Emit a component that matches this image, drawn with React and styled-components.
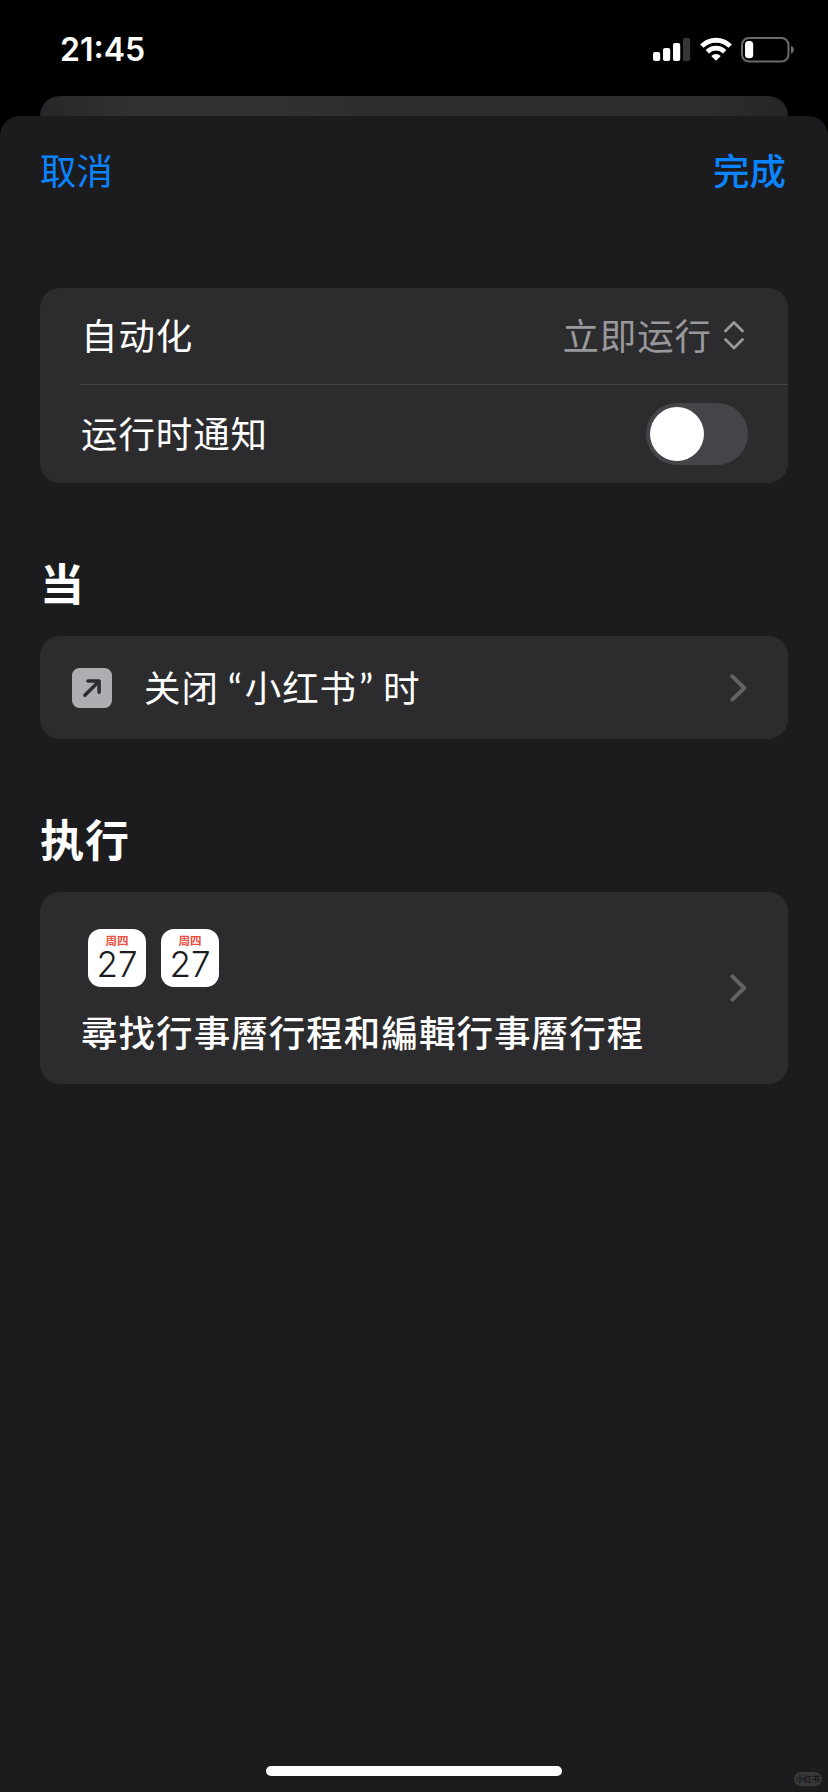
import React from 'react'
import styled, { createGlobalStyle } from 'styled-components'

const App = () => {
    return (
        <Screen>
            <GlobalStyle />
            <StatusBar>
                <Time>21:45</Time>
                <StatusIcons>
                    <SignalIcon />
                    <WifiIcon />
                    <BatteryIcon />
                </StatusIcons>
            </StatusBar>
            <BackSheet />
            <Sheet>
                <NavBar>
                    <NavButton>取消</NavButton>
                    <NavButton $bold>完成</NavButton>
                </NavBar>
                <Content>
                    <Card>
                        <Row $height={96}>
                            <Label>自动化</Label>
                            <Picker>
                                立即运行
                                <UpDownIcon />
                            </Picker>
                        </Row>
                        <Divider />
                        <Row $height={98}>
                            <Label>运行时通知</Label>
                            <Switch role="switch" aria-checked="false">
                                <Knob />
                            </Switch>
                        </Row>
                    </Card>

                    <Heading>当</Heading>
                    <Card>
                        <LinkRow $height={103}>
                            <AppIcon />
                            <Trigger>
                                关闭<Quote $open>“</Quote>小红书<Quote>”</Quote>时
                            </Trigger>
                            <Chevron />
                        </LinkRow>
                    </Card>

                    <Heading>执行</Heading>
                    <Card>
                        <LinkRow $height={192}>
                            <Action>
                                <Calendars>
                                    <Calendar />
                                    <Calendar />
                                </Calendars>
                                <ActionTitle>尋找行事曆行程和編輯行事曆行程</ActionTitle>
                            </Action>
                            <Chevron />
                        </LinkRow>
                    </Card>
                </Content>
                <HomeIndicator />
                <Watermark>小红书</Watermark>
            </Sheet>
        </Screen>
    )
}

export default App

const SignalIcon = () => (
    <svg width="38" height="26" viewBox="0 0 38 26">
        <rect x="0" y="15" width="7.2" height="9" rx="2" fill="#fff" />
        <rect x="10" y="11" width="7.2" height="13" rx="2" fill="#fff" />
        <rect x="20" y="6" width="7.2" height="18" rx="2" fill="#fff" />
        <rect x="30" y="1" width="7.2" height="23" rx="2" fill="#363636" />
    </svg>
)

const WifiIcon = () => (
    <svg width="32" height="26" viewBox="0 0 32 26">
        <g fill="none" stroke="#fff" strokeWidth="4.8">
            <path d="M1.8 9.1A20.2 20.2 0 0 1 30.2 9.1" />
            <path d="M7.3 14.7A12.4 12.4 0 0 1 24.7 14.7" />
        </g>
        <path d="M16 23.8L11.2 19A6.9 6.9 0 0 1 20.8 19Z" fill="#fff" />
    </svg>
)

const BatteryIcon = () => (
    <svg width="54" height="26" viewBox="0 0 54 26">
        <rect x="1" y="1" width="46.5" height="23.5" rx="7" fill="none" stroke="#6b6b6b" strokeWidth="2" />
        <rect x="4" y="4" width="8.2" height="17.3" rx="3.6" fill="#fff" />
        <path d="M50 8.8C54 10.5 54 15 50 16.7Z" fill="#6b6b6b" />
    </svg>
)

const UpDownIcon = () => (
    <svg width="20" height="30" viewBox="0 0 20 30">
        <path
            d="M1.5 11L10 2.5L18.5 11M1.5 19.5L10 28L18.5 19.5"
            fill="none"
            stroke="#98989d"
            strokeWidth="2.8"
            strokeLinecap="round"
            strokeLinejoin="round"
        />
    </svg>
)

const Chevron = () => (
    <svg width="18" height="28" viewBox="0 0 18 28">
        <path
            d="M2.4 2.4L14.2 14L2.4 25.6"
            fill="none"
            stroke="#636366"
            strokeWidth="4"
            strokeLinecap="round"
            strokeLinejoin="round"
        />
    </svg>
)

const AppIcon = () => (
    <svg width="40" height="40" viewBox="0 0 40 40">
        <rect width="40" height="40" rx="7.5" fill="#aeaeb2" />
        <path
            d="M12.9 27.3L26.8 13.4M15.9 13.1H27.1V24.3"
            fill="none"
            stroke="#2c2c2e"
            strokeWidth="3.5"
            strokeLinecap="round"
            strokeLinejoin="round"
        />
    </svg>
)

const Calendar = () => (
    <CalendarBox>
        <Weekday>周四</Weekday>
        <Day>27</Day>
    </CalendarBox>
)

const GlobalStyle = createGlobalStyle`
    * {
        box-sizing: border-box;
    }
    body {
        margin: 0;
        background: #000;
    }
    svg {
        display: block;
        flex-shrink: 0;
    }
`

const Screen = styled.div`
    width: 828px;
    height: 1792px;
    display: flex;
    flex-direction: column;
    overflow: hidden;
    background: #000;
    color: #fff;
    font-family: Inter, "Noto Sans CJK SC", sans-serif;
`

const StatusBar = styled.div`
    height: 96px;
    flex-shrink: 0;
    display: flex;
    justify-content: space-between;
    align-items: flex-start;
    padding: 31px 33px 0 60px;
`

const Time = styled.div`
    font-size: 32px;
    line-height: 38px;
    font-weight: 580;
`

const StatusIcons = styled.div`
    display: flex;
    gap: 9px;
    padding-top: 6px;
`

const BackSheet = styled.div`
    height: 20px;
    flex-shrink: 0;
    margin: 0 40px;
    border-radius: 20px 20px 0 0;
    background: linear-gradient(90deg, #262628 0, #313133 12%, #313133 30%, #2c2c2e 50%, #2c2c2e 90%, #262628 100%);
`

const Sheet = styled.div`
    position: relative;
    flex: 1;
    display: flex;
    flex-direction: column;
    border-radius: 20px 20px 0 0;
    background: #1c1c1e;
`

const NavBar = styled.div`
    height: 110px;
    display: flex;
    justify-content: space-between;
    align-items: center;
    padding: 0 42px 3px 40px;
`

const NavButton = styled.button`
    border: 0;
    padding: 0;
    background: none;
    color: #0a84ff;
    font-family: "Noto Sans CJK SC", sans-serif;
    font-size: 36.5px;
    line-height: 54px;
    font-weight: ${(props) => (props.$bold ? 500 : 400)};
`

const Content = styled.div`
    flex: 1;
    padding: 62px 40px 0;
`

const Card = styled.div`
    border-radius: 20px;
    background: #2c2c2e;
`

const Row = styled.div`
    height: ${(props) => props.$height}px;
    display: flex;
    justify-content: space-between;
    align-items: center;
    padding: 0 40px 0 41px;
`

const LinkRow = styled(Row)`
    justify-content: flex-start;
    padding: 0 40px 0 32px;
`

const Divider = styled.div`
    height: 1px;
    margin-left: 40px;
    background: #444446;
`

const Label = styled.div`
    padding-bottom: 2px;
    font-family: "Noto Sans CJK SC", sans-serif;
    font-size: 36.5px;
    line-height: 54px;
    font-weight: 400;
    letter-spacing: 0.9px;
`

const Picker = styled(Label)`
    display: flex;
    align-items: center;
    gap: 12px;
    padding-right: 4px;
    color: #98989d;
`

const Switch = styled.div`
    width: 102px;
    height: 62px;
    padding: 4px;
    border-radius: 31px;
    background: #454549;
`

const Knob = styled.div`
    width: 54px;
    height: 54px;
    border-radius: 50%;
    background: #fff;
`

const Heading = styled.h2`
    margin: 69px 0 24px;
    font-family: "Noto Sans CJK SC", sans-serif;
    font-size: 44px;
    line-height: 60px;
    font-weight: 700;
    letter-spacing: 0.9px;
`

const Trigger = styled(Label)`
    flex: 1;
    margin-left: 32px;
    padding: 0 0 1px;
`

const Quote = styled.span`
    display: inline-block;
    width: 26px;
    padding: 0 2px;
    font-family: Lato, sans-serif;
    font-size: 39px;
    line-height: 40px;
    text-align: ${(props) => (props.$open ? 'right' : 'left')};
`

const Action = styled.div`
    flex: 1;
    padding: 11px 0 0 9px;
`

const Calendars = styled.div`
    display: flex;
    gap: 15px;
    padding-left: 7px;
`

const CalendarBox = styled.div`
    width: 58px;
    height: 58px;
    display: flex;
    flex-direction: column;
    align-items: center;
    border-radius: 13px;
    background: #fff;
`

const Weekday = styled.div`
    margin-top: 4px;
    color: #eb4e3d;
    font-family: "Noto Sans CJK SC", sans-serif;
    font-size: 11.5px;
    line-height: 14px;
    font-weight: 700;
`

const Day = styled.div`
    color: #1c1c1e;
    font-size: 35px;
    line-height: 34px;
    font-weight: 290;
`

const ActionTitle = styled.div`
    margin-top: 18px;
    font-family: "Noto Sans CJK TC", sans-serif;
    font-size: 36.5px;
    line-height: 54px;
    font-weight: 500;
    letter-spacing: 1.05px;
`

const HomeIndicator = styled.div`
    align-self: center;
    width: 296px;
    height: 10px;
    margin-bottom: 16px;
    border-radius: 5px;
    background: #fff;
`

const Watermark = styled.div`
    position: absolute;
    right: 6px;
    bottom: 6px;
    width: 28px;
    height: 14px;
    border-radius: 7px;
    background: #38383a;
    color: #19191b;
    font-family: "Noto Sans CJK SC", sans-serif;
    font-size: 8px;
    line-height: 13px;
    font-weight: 700;
    text-align: center;
`
